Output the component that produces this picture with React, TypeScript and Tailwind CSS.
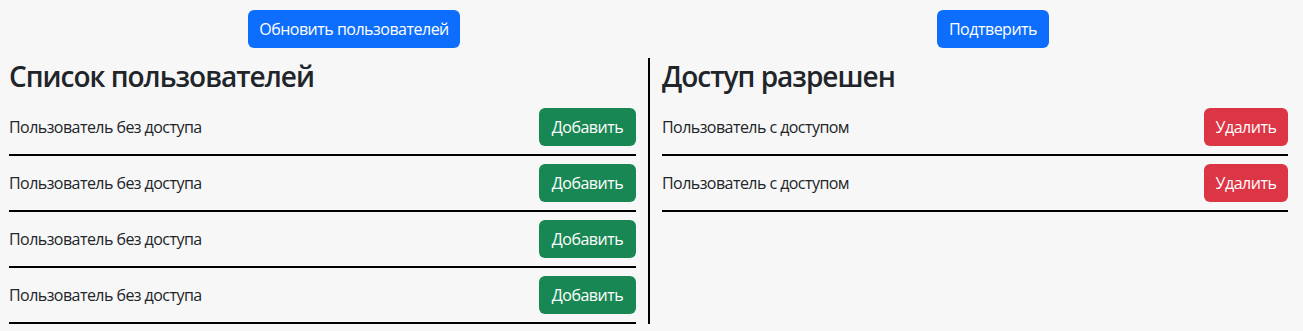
import React from 'react';

const noAccess = ['Пользователь без доступа', 'Пользователь без доступа', 'Пользователь без доступа', 'Пользователь без доступа'];
const withAccess = ['Пользователь с доступом', 'Пользователь с доступом'];

function Row({ name, action }: { name: string; action: React.ReactNode }) {
  return (
    <div className="flex items-center justify-between py-2 border-b-2 border-black">
      <span className="text-[16px] leading-6 tracking-[-0.55px]">{name}</span>
      {action}
    </div>
  );
}

export default function App() {
  return (
    <div className="min-h-screen bg-[#f7f7f7] text-[#212529] font-['Open_Sans',sans-serif]">
      <div className="flex pt-[10px]">
        <div className="w-[650px] flex">
          <button className="ml-[248px] w-[212px] h-[38px] rounded-[6px] bg-[#0d6efd] text-white text-[16px] tracking-[-0.5px]">
            Обновить пользователей
          </button>
        </div>
        <div className="flex">
          <button className="ml-[287px] w-[112px] h-[38px] rounded-[6px] bg-[#0d6efd] text-white text-[16px] tracking-[-0.5px]">
            Подтверить
          </button>
        </div>
      </div>

      <div className="flex mt-[10px]">
        {/* Список пользователей */}
        <div className="w-[650px] pl-[9px] pr-[12px] border-r-2 border-black">
          <h3 className="text-[28px] font-semibold leading-[34px] mt-[1px] mb-[7px] tracking-[-1px]">Список пользователей</h3>
          {noAccess.map((n, i) => (
            <Row
              key={i}
              name={n}
              action={
                <button className="w-[97px] h-[38px] rounded-[6px] bg-[#198754] text-white text-[16px] tracking-[-0.5px]">Добавить</button>
              }
            />
          ))}
        </div>

        {/* Доступ разрешен */}
        <div className="flex-1 pl-[12px] pr-[15px]">
          <h3 className="text-[28px] font-semibold leading-[34px] mt-[1px] mb-[7px] tracking-[-1px]">Доступ разрешен</h3>
          {withAccess.map((n, i) => (
            <Row
              key={i}
              name={n}
              action={
                <button className="w-[84px] h-[38px] rounded-[6px] bg-[#dc3545] text-white text-[16px] tracking-[-0.5px]">Удалить</button>
              }
            />
          ))}
        </div>
      </div>
    </div>
  );
}
